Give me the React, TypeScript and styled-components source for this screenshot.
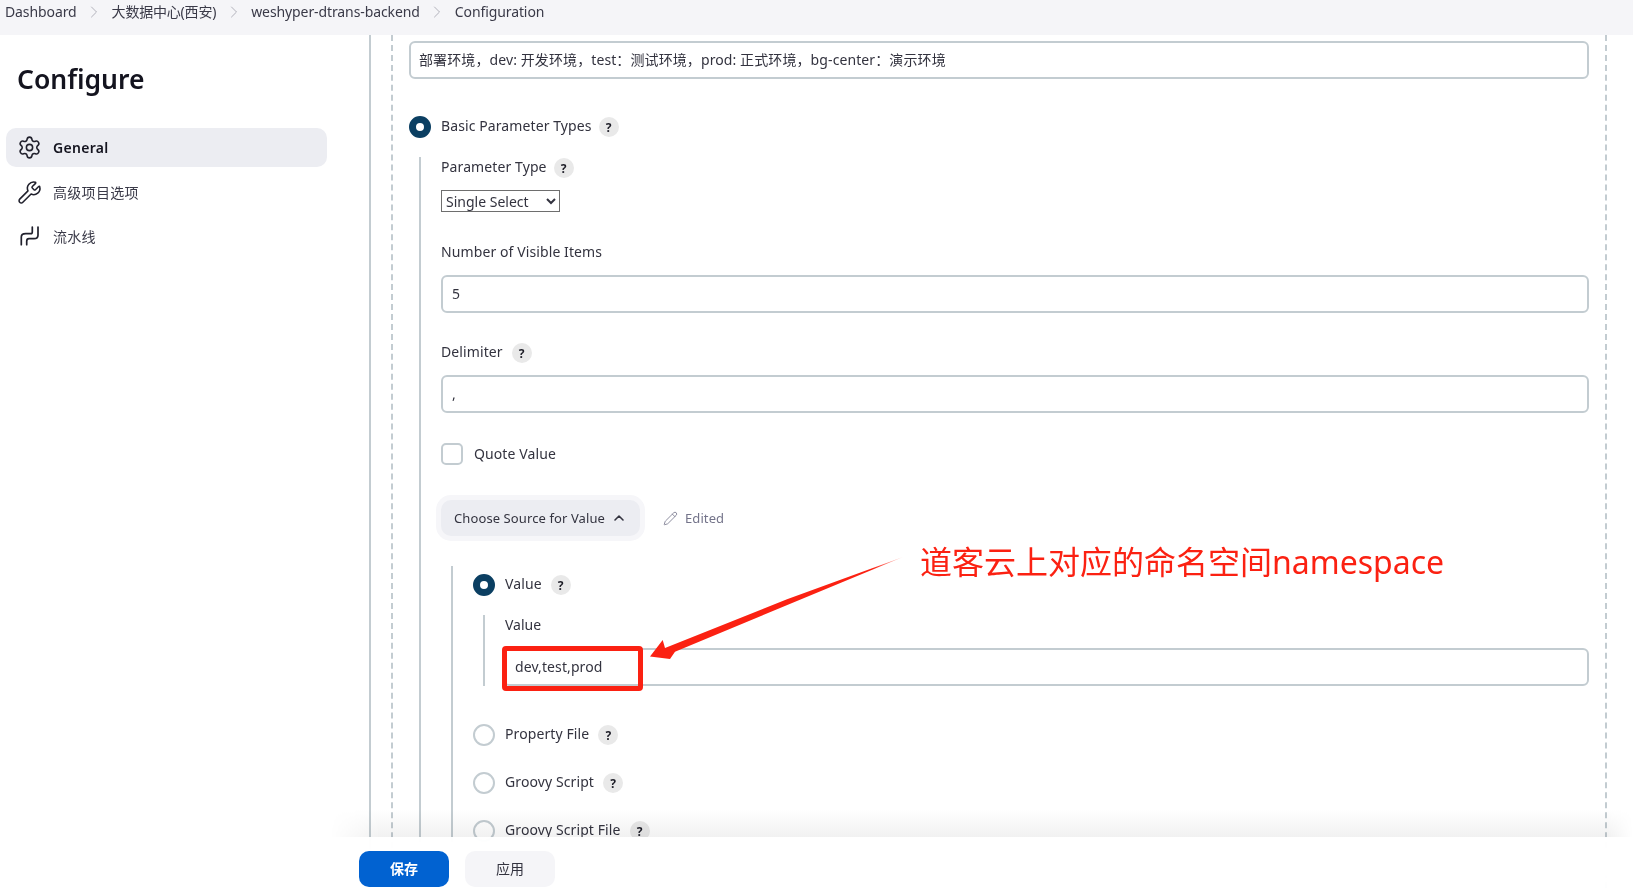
import React from 'react';
import styled, { createGlobalStyle } from 'styled-components';
import { ChevronRight, ChevronUp, Pencil, Settings, Wrench } from 'lucide-react';

const GlobalStyle = createGlobalStyle`
  html, body {
    margin: 0;
    height: 100%;
    background: #fff;
    color: #33333f;
    font-family: "Noto Sans", "Noto Sans CJK SC", sans-serif;
    font-size: 14px;
  }
  * { box-sizing: border-box; }
`;

const line = '#c3ccd1';

const Page = styled.div`
  position: relative;
  display: flex;
  flex-direction: column;
  width: 1633px;
  height: 888px;
  overflow: hidden;
`;

const Breadcrumbs = styled.header`
  flex: none;
  display: flex;
  align-items: flex-start;
  gap: 7.5px;
  height: 35px;
  padding: 2px 0 0 5px;
  background: #f5f5f8;
  line-height: 20px;
`;

const Crumb = styled.span<{ $tight?: boolean }>`
  color: #3a3a48;
  letter-spacing: ${(p) => (p.$tight ? '-0.2px' : '-0.1px')};
`;

const Separator = styled(ChevronRight)`
  color: #a3a3ae;
`;

const Body = styled.div`
  flex: 1;
  display: flex;
  min-height: 0;
`;

const Sidebar = styled.aside`
  flex: none;
  width: 330px;
  padding: 0 3px 0 6px;
`;

const Title = styled.h1`
  margin: 23px 0 28px 11px;
  font-size: 26.5px;
  line-height: 42px;
  font-weight: 600;
  color: #14141f;
`;

const NavItem = styled.div<{ $active?: boolean }>`
  display: flex;
  align-items: center;
  gap: 11px;
  height: 39px;
  margin-bottom: 6px;
  padding-left: 11px;
  border-radius: 10px;
  background: ${(p) => (p.$active ? '#ecedf2' : 'transparent')};
  font-weight: ${(p) => (p.$active ? 600 : 400)};
  color: ${(p) => (p.$active ? '#14141f' : '#3a3a48')};
`;

const NavIcon = styled.span`
  display: flex;
  width: 25px;
  height: 25px;
  color: #20202c;
`;

const NavText = styled.span<{ $lift?: number }>`
  margin-top: ${(p) => -(p.$lift ?? 0)}px;
  letter-spacing: 0.3px;
`;

const Main = styled.main`
  flex: 1;
  padding-left: 39px;
  overflow: hidden;
`;

const OuterRule = styled.div`
  height: 100%;
  padding-left: 20px;
  border-left: 2px solid ${line};
`;

const DashedBox = styled.div`
  width: 1216px;
  height: 100%;
  padding: 6px 16px 0 16px;
  border-left: 2px dashed ${line};
  border-right: 2px dashed ${line};
`;

const TextBox = styled.input<{ $top?: number; $pad?: number }>`
  display: block;
  width: 100%;
  height: 38px;
  margin-top: ${(p) => p.$top ?? 0}px;
  padding: 0 ${(p) => p.$pad ?? 9}px 2px;
  border: 2px solid ${line};
  border-radius: 6px;
  background: #fff;
  outline: none;
  font: inherit;
  letter-spacing: 0.1px;
  color: #33333f;
`;

const Row = styled.div<{ $top: number }>`
  display: flex;
  align-items: center;
  height: 22px;
  margin-top: ${(p) => p.$top}px;
`;

const Label = styled.label<{ $gap?: number; $lift?: number }>`
  line-height: 20px;
  margin-top: ${(p) => -(p.$lift ?? 2)}px;
  margin-right: ${(p) => p.$gap ?? 9}px;
  letter-spacing: 0.1px;
  color: #33333f;
`;

const Help = styled.span`
  display: inline-flex;
  align-items: center;
  justify-content: center;
  width: 20px;
  height: 20px;
  border-radius: 50%;
  background: #e9e9e9;
  font-size: 12px;
  font-weight: 700;
  color: #1c1c26;
`;

const Radio = styled.span<{ $on?: boolean }>`
  flex: none;
  width: 22px;
  height: 22px;
  margin-right: 10px;
  border-radius: 50%;
  background: #fff;
  border: ${(p) => (p.$on ? `7.5px solid #0b3f62` : `2px solid ${line}`)};
`;

const Nested = styled.div<{ $top: number; $pad: number; $padTop?: number }>`
  margin: ${(p) => p.$top}px 0 0 10px;
  padding: ${(p) => p.$padTop ?? 0}px 0 0 ${(p) => p.$pad}px;
  border-left: 2px solid ${line};
`;

const Select = styled.select`
  display: block;
  width: 119px;
  height: 22px;
  margin-top: 11px;
  padding: 0;
  border: 1px solid #6e6e6e;
  border-radius: 0;
  background: #fff;
  font: inherit;
  color: #33333f;
`;

const Checkbox = styled.span`
  flex: none;
  width: 22px;
  height: 22px;
  margin-right: 11px;
  border: 2px solid ${line};
  border-radius: 5px;
`;

const SourceRow = styled.div`
  display: flex;
  align-items: center;
  margin-top: 35px;
`;

const SourceButton = styled.button`
  display: flex;
  align-items: center;
  gap: 6px;
  height: 36px;
  padding: 0 13px;
  border: none;
  border-radius: 10px;
  background: #ecedf2;
  box-shadow: 0 0 0 5px #f6f6f9;
  font: inherit;
  font-size: 13px;
  letter-spacing: 0.1px;
  color: #33333f;
`;

const EditedNote = styled.span`
  display: flex;
  align-items: center;
  gap: 7px;
  margin-left: 23px;
  font-size: 13px;
  letter-spacing: 0.1px;
  color: #74748a;
`;

const FieldLabel = styled.div`
  margin-left: 2px;
  line-height: 20px;
  color: #33333f;
`;

const FootShade = styled.div`
  position: absolute;
  left: 330px;
  right: 0;
  bottom: 51px;
  height: 27px;
  background: linear-gradient(to bottom, #fff, #f1f1f1);
  mix-blend-mode: multiply;
  mask-image: linear-gradient(to right, transparent, #000 50px, #000 calc(100% - 25px), transparent);
  pointer-events: none;
`;

const FootBar = styled.footer`
  position: absolute;
  left: 330px;
  right: 0;
  bottom: 0;
  display: flex;
  gap: 16px;
  height: 51px;
  padding: 14px 0 0 29px;
  background: rgba(255, 255, 255, 0.93);
  backdrop-filter: blur(14px);
`;

const ActionButton = styled.button<{ $primary?: boolean }>`
  width: 90px;
  height: 36px;
  padding: 0 0 2px;
  border: none;
  border-radius: 10px;
  background: ${(p) => (p.$primary ? '#0162d1' : '#f5f5f8')};
  color: ${(p) => (p.$primary ? '#fff' : '#33333f')};
  font: inherit;
  font-weight: ${(p) => (p.$primary ? 700 : 400)};
`;

const RedBox = styled.div`
  position: absolute;
  left: 502px;
  top: 646px;
  width: 141px;
  height: 45px;
  border: 5px solid #fb2112;
  border-radius: 4px;
`;

const ArrowLayer = styled.svg`
  position: absolute;
  left: 640px;
  top: 550px;
`;

const Callout = styled.div`
  position: absolute;
  left: 920px;
  top: 539px;
  font-size: 32px;
  line-height: 46px;
  color: #fb2112;
  white-space: nowrap;
`;

function PipelineIcon() {
  return (
    <svg width="25" height="25" viewBox="-2.5 -2.5 25 25" fill="none" stroke="currentColor" strokeWidth="1.7" strokeLinecap="round">
      <path d="M1.8 17.2V9.5C1.8 7.5 3.5 6.2 6.2 6.2H11.2C12.5 6.2 12.8 5.5 12.8 4.5V-.5" />
      <path d="M7.2 17.2V13.8C7.2 12 8 11.2 9.5 11.2H14.5C17 11.2 18.5 10 18.5 7.8V-.5" />
    </svg>
  );
}

export default function App() {
  return (
    <Page>
      <GlobalStyle />
      <Breadcrumbs>
        <Crumb>Dashboard</Crumb>
        <Separator size={20} strokeWidth={1} />
        <Crumb $tight>大数据中心(西安)</Crumb>
        <Separator size={20} strokeWidth={1} />
        <Crumb>weshyper-dtrans-backend</Crumb>
        <Separator size={20} strokeWidth={1} />
        <Crumb>Configuration</Crumb>
      </Breadcrumbs>
      <Body>
        <Sidebar>
          <Title>Configure</Title>
          <NavItem $active>
            <NavIcon><Settings size={25} strokeWidth={1.5} /></NavIcon>
            <NavText>General</NavText>
          </NavItem>
          <NavItem>
            <NavIcon><Wrench size={25} strokeWidth={1.5} /></NavIcon>
            <NavText $lift={2}>高级项目选项</NavText>
          </NavItem>
          <NavItem>
            <NavIcon><PipelineIcon /></NavIcon>
            <NavText $lift={3}>流水线</NavText>
          </NavItem>
        </Sidebar>
        <Main>
          <OuterRule>
            <DashedBox>
              <TextBox readOnly $pad={8} value="部署环境，dev: 开发环境，test：测试环境，prod: 正式环境，bg-center：演示环境" />
              <Row $top={37}>
                <Radio $on />
                <Label $gap={7}>Basic Parameter Types</Label>
                <Help>?</Help>
              </Row>
              <Nested $top={19} $pad={20}>
                <Row $top={0}>
                  <Label $gap={7}>Parameter Type</Label>
                  <Help>?</Help>
                </Row>
                <Select defaultValue="single">
                  <option value="single">Single Select</option>
                </Select>
                <Row $top={30}>
                  <Label>Number of Visible Items</Label>
                </Row>
                <TextBox readOnly value="5" $top={11} />
                <Row $top={29}>
                  <Label>Delimiter</Label>
                  <Help>?</Help>
                </Row>
                <TextBox readOnly value="," $top={11} />
                <Row $top={30}>
                  <Checkbox />
                  <Label $lift={0}>Quote Value</Label>
                </Row>
                <SourceRow>
                  <SourceButton>
                    Choose Source for Value
                    <ChevronUp size={16} strokeWidth={2.4} />
                  </SourceButton>
                  <EditedNote>
                    <Pencil size={15} strokeWidth={1.3} />
                    Edited
                  </EditedNote>
                </SourceRow>
                <Nested $top={30} $pad={20} $padTop={8}>
                  <Row $top={0}>
                    <Radio $on />
                    <Label>Value</Label>
                    <Help>?</Help>
                  </Row>
                  <Nested $top={19} $pad={18}>
                    <FieldLabel>Value</FieldLabel>
                    <TextBox readOnly $pad={10} value="dev,test,prod" $top={13} />
                  </Nested>
                  <Row $top={38}>
                    <Radio />
                    <Label>Property File</Label>
                    <Help>?</Help>
                  </Row>
                  <Row $top={26}>
                    <Radio />
                    <Label>Groovy Script</Label>
                    <Help>?</Help>
                  </Row>
                  <Row $top={26}>
                    <Radio />
                    <Label>Groovy Script File</Label>
                    <Help>?</Help>
                  </Row>
                </Nested>
              </Nested>
            </DashedBox>
          </OuterRule>
        </Main>
      </Body>
      <FootShade />
      <FootBar>
        <ActionButton $primary>保存</ActionButton>
        <ActionButton>应用</ActionButton>
      </FootBar>
      <RedBox />
      <ArrowLayer width="270" height="115" viewBox="640 550 270 115">
        <defs>
          <linearGradient id="tail" x1="650" y1="656" x2="903" y2="557" gradientUnits="userSpaceOnUse">
            <stop offset="0.88" stopColor="#fb2112" />
            <stop offset="1" stopColor="#fb2112" stopOpacity="0.2" />
          </linearGradient>
        </defs>
        <polygon points="650,656.5 662.7,640 665,648 787,599.3 903,557 675,651.7 670,659" fill="url(#tail)" />
      </ArrowLayer>
      <Callout>道客云上对应的命名空间namespace</Callout>
    </Page>
  );
}
